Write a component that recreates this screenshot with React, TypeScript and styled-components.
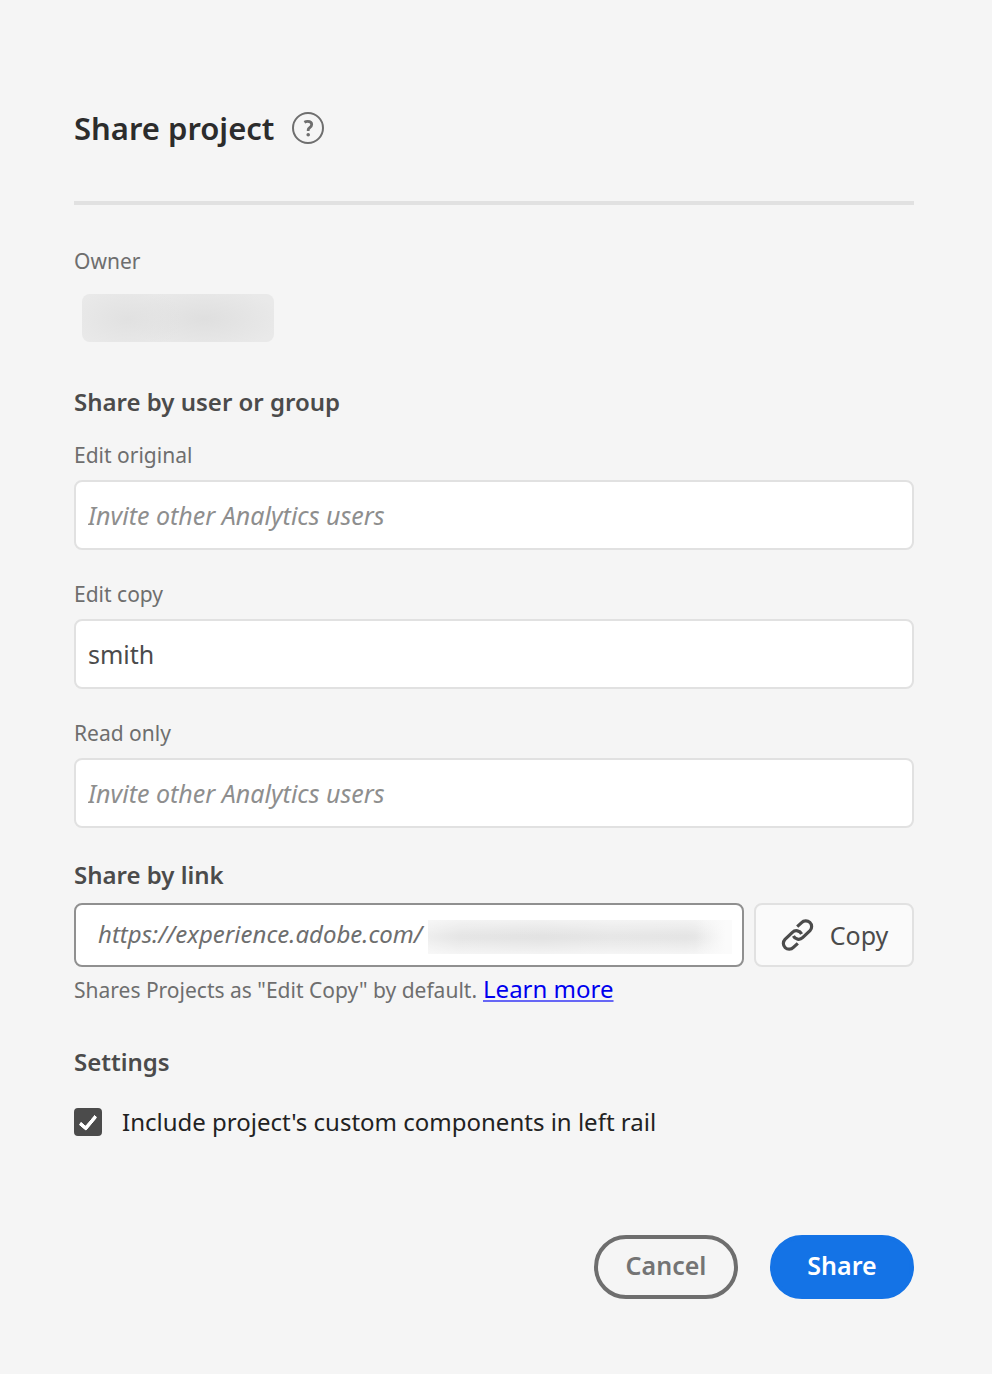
import React, { useState } from "react";
import styled, { createGlobalStyle } from "styled-components";

const GlobalStyle = createGlobalStyle`
  *, *::before, *::after { box-sizing: border-box; }
  body {
    margin: 0;
    background: #f5f5f5;
    color: #222;
    font-family: "Noto Sans", "Open Sans", sans-serif;
  }
  button, input { font-family: inherit; }
`;

const Dialog = styled.form`
  display: flex;
  flex-direction: column;
  padding: 108px 78px 75px 74px;
`;

const Header = styled.header`
  display: flex;
  align-items: center;
  gap: 18px;
  padding-bottom: 53px;
  border-bottom: 4px solid #e1e1e1;
`;

const Title = styled.h1`
  margin: 0;
  font-size: 31px;
  line-height: 40px;
  font-weight: 600;
  color: #2c2c2c;
`;

const HelpButton = styled.button`
  display: flex;
  width: 32px;
  height: 32px;
  padding: 0;
  border: 0;
  background: none;
`;

const Section = styled.section<{ $top: number }>`
  display: flex;
  flex-direction: column;
  margin-top: ${(p) => p.$top}px;
`;

const SectionTitle = styled.h2`
  margin: 0;
  font-size: 24px;
  line-height: 36px;
  font-weight: 600;
  color: #4b4b4b;
`;

const Caption = styled.span`
  font-size: 21px;
  line-height: 30px;
  color: #6e6e6e;
`;

const OwnerName = styled.div`
  width: 192px;
  height: 48px;
  margin: 18px 0 0 8px;
  border-radius: 8px;
  background:
    radial-gradient(ellipse 56px 32px at 24% 52%, #e1e1e1, #e1e1e100),
    radial-gradient(ellipse 76px 32px at 64% 52%, #dfdfdf, #dfdfdf00),
    #e9e9e9;
`;

const Field = styled.label<{ $top: number }>`
  display: flex;
  flex-direction: column;
  gap: 10px;
  margin-top: ${(p) => p.$top}px;
`;

const TextInput = styled.input`
  width: 100%;
  height: 70px;
  padding: 0 12px;
  border: 2px solid #e1e1e1;
  border-radius: 8px;
  background: #fff;
  font-size: 25px;
  color: #4b4b4b;
  outline: none;
  &::placeholder {
    color: #8e8e8e;
    font-style: italic;
    opacity: 1;
  }
`;

const LinkRow = styled.div`
  display: flex;
  gap: 10px;
  margin-top: 10px;
`;

const LinkBox = styled.div`
  display: flex;
  align-items: center;
  flex: 1;
  min-width: 0;
  height: 64px;
  padding: 0 10px 0 22px;
  border: 2px solid #909090;
  border-radius: 8px;
  background: #fff;
`;

const LinkInput = styled.input`
  width: 330px;
  height: 40px;
  padding: 0 0 4px;
  border: 0;
  background: none;
  font-size: 24px;
  font-style: italic;
  color: #6e6e6e;
  outline: none;
`;

const HiddenPath = styled.div`
  flex: 1;
  height: 34px;
  margin-top: 4px;
  background:
    linear-gradient(90deg, #fff0 88%, #fbfbfb 98%),
    linear-gradient(#fff8, #fff0 45%, #fff0 55%, #fff9),
    linear-gradient(90deg, #eeeeee, #e6e6e6 10%, #e3e3e3 38%, #e7e7e7 60%, #e5e5e5 85%, #eeeeee);
`;

const CopyButton = styled.button`
  display: flex;
  align-items: center;
  justify-content: center;
  gap: 16px;
  width: 160px;
  height: 64px;
  padding: 0;
  border: 2px solid #e1e1e1;
  border-radius: 8px;
  background: #fafafa;
  font-size: 25px;
  color: #4b4b4b;
`;

const Hint = styled.p`
  display: flex;
  align-items: baseline;
  gap: 6px;
  margin: 6px 0 0;
  line-height: 32px;
`;

const LearnMore = styled.a`
  font-size: 24px;
  color: #0000ee;
  text-decoration: underline;
  text-decoration-thickness: 2px;
  text-decoration-color: #6666f5;
  text-underline-offset: 2px;
  text-decoration-skip-ink: none;
`;

const CheckRow = styled.label`
  display: flex;
  align-items: center;
  gap: 20px;
  margin-top: 24px;
  font-size: 24px;
  line-height: 36px;
`;

const Checkbox = styled.input`
  appearance: none;
  flex: none;
  display: grid;
  place-items: center;
  width: 28px;
  height: 28px;
  margin: 0;
  border: 4px solid #4b4b4b;
  border-radius: 4px;
  &:checked { background: #4b4b4b; }
  &:checked::before {
    content: "";
    width: 10px;
    height: 18px;
    margin-bottom: 4px;
    border: solid #fff;
    border-width: 0 4px 4px 0;
    border-radius: 2px;
    transform: rotate(40deg);
  }
`;

const Footer = styled.footer`
  display: flex;
  justify-content: flex-end;
  gap: 32px;
  margin-top: 95px;
`;

const PillButton = styled.button<{ $primary?: boolean }>`
  width: 144px;
  height: 64px;
  padding: 0 0 4px;
  border: 4px solid ${(p) => (p.$primary ? "#1473e6" : "#6e6e6e")};
  border-radius: 32px;
  background: ${(p) => (p.$primary ? "#1473e6" : "transparent")};
  color: ${(p) => (p.$primary ? "#fff" : "#747474")};
  font-size: 25px;
  font-weight: 600;
`;

const HelpIcon = () => (
  <svg width="32" height="32" viewBox="0 0 32 32" fill="none" aria-hidden="true">
    <circle cx="16" cy="16" r="15" stroke="#6e6e6e" strokeWidth="2" />
    <path
      d="M12.4 10.2c1-.6 2-.9 3.300-.9 2.600 0 4 1.300 4 3.200 0 3-3.500 3.200-3.500 5.300v1.200"
      stroke="#6e6e6e"
      strokeWidth="2.800"
    />
    <circle cx="16.200" cy="22.800" r="1.800" fill="#6e6e6e" />
  </svg>
);

const ChainIcon = () => (
  <svg width="34" height="34" viewBox="0 0 34 34" fill="none" stroke="#4b4b4b" strokeWidth="3.200" aria-hidden="true">
    <path d="M17.200 8.600l4.400-4a5.800 5.800 0 0 1 8.400 8.100l-7.400 7a5.800 5.800 0 0 1-9.200-1.700" />
    <path d="M17.800 25.400l-4.400 4a5.800 5.800 0 0 1-8.400-8.100l7.400-7a5.800 5.800 0 0 1 9.200 1.700" />
  </svg>
);

export default function App() {
  const [original, setOriginal] = useState("");
  const [copy, setCopy] = useState("smith");
  const [readOnly, setReadOnly] = useState("");
  const [include, setInclude] = useState(true);
  const placeholder = "Invite other Analytics users";

  return (
    <>
      <GlobalStyle />
      <Dialog onSubmit={(e) => e.preventDefault()}>
        <Header>
          <Title>Share project</Title>
          <HelpButton type="button" aria-label="Help">
            <HelpIcon />
          </HelpButton>
        </Header>

        <Section $top={41}>
          <Caption>Owner</Caption>
          <OwnerName aria-label="Owner name hidden" />
        </Section>

        <Section $top={42}>
          <SectionTitle>Share by user or group</SectionTitle>
          <Field $top={20}>
            <Caption>Edit original</Caption>
            <TextInput placeholder={placeholder} value={original} onChange={(e) => setOriginal(e.target.value)} />
          </Field>
          <Field $top={29}>
            <Caption>Edit copy</Caption>
            <TextInput placeholder={placeholder} value={copy} onChange={(e) => setCopy(e.target.value)} />
          </Field>
          <Field $top={29}>
            <Caption>Read only</Caption>
            <TextInput placeholder={placeholder} value={readOnly} onChange={(e) => setReadOnly(e.target.value)} />
          </Field>
        </Section>

        <Section $top={29}>
          <SectionTitle id="share-link">Share by link</SectionTitle>
          <LinkRow>
            <LinkBox>
              <LinkInput aria-labelledby="share-link" readOnly value="https://experience.adobe.com/" />
              <HiddenPath />
            </LinkBox>
            <CopyButton type="button">
              <ChainIcon />
              Copy
            </CopyButton>
          </LinkRow>
          <Hint>
            <Caption>Shares Projects as "Edit Copy" by default.</Caption>
            <LearnMore href="#learn-more">Learn more</LearnMore>
          </Hint>
        </Section>

        <Section $top={39}>
          <SectionTitle>Settings</SectionTitle>
          <CheckRow>
            <Checkbox type="checkbox" checked={include} onChange={(e) => setInclude(e.target.checked)} />
            Include project's custom components in left rail
          </CheckRow>
        </Section>

        <Footer>
          <PillButton type="button">Cancel</PillButton>
          <PillButton type="submit" $primary>
            Share
          </PillButton>
        </Footer>
      </Dialog>
    </>
  );
}
